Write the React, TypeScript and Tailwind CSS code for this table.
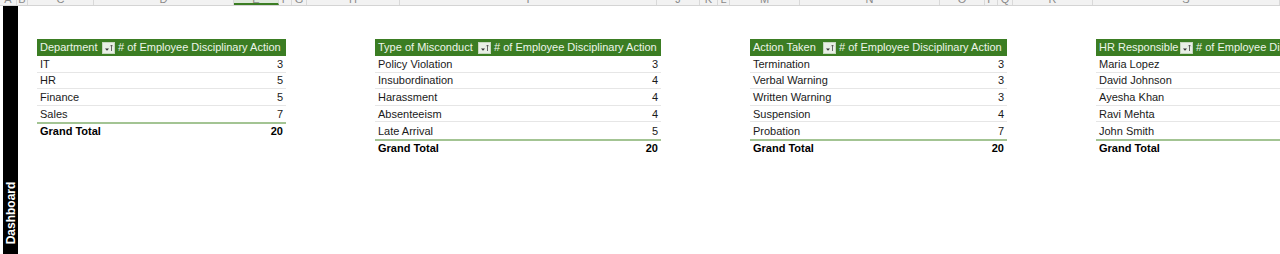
import React from 'react';

type Row = { label: string; value: number };
type Pivot = { field: string; width: string; firstCol: string; rows: Row[]; total: number };

const pivots: Pivot[] = [
    {
        field: 'Department',
        width: 'w-[249px]',
        firstCol: 'w-[79px]',
        rows: [
            { label: 'IT', value: 3 },
            { label: 'HR', value: 5 },
            { label: 'Finance', value: 5 },
            { label: 'Sales', value: 7 },
        ],
        total: 20,
    },
    {
        field: 'Type of Misconduct',
        width: 'w-[286px]',
        firstCol: 'w-[117px]',
        rows: [
            { label: 'Policy Violation', value: 3 },
            { label: 'Insubordination', value: 4 },
            { label: 'Harassment', value: 4 },
            { label: 'Absenteeism', value: 4 },
            { label: 'Late Arrival', value: 5 },
        ],
        total: 20,
    },
    {
        field: 'Action Taken',
        width: 'w-[257px]',
        firstCol: 'w-[87px]',
        rows: [
            { label: 'Termination', value: 3 },
            { label: 'Verbal Warning', value: 3 },
            { label: 'Written Warning', value: 3 },
            { label: 'Suspension', value: 4 },
            { label: 'Probation', value: 7 },
        ],
        total: 20,
    },
    {
        field: 'HR Responsible',
        width: 'w-[255px]',
        firstCol: 'w-[98px]',
        rows: [
            { label: 'Maria Lopez', value: 4 },
            { label: 'David Johnson', value: 4 },
            { label: 'Ayesha Khan', value: 4 },
            { label: 'Ravi Mehta', value: 4 },
            { label: 'John Smith', value: 4 },
        ],
        total: 20,
    },
];

// column letters along the top (only their lower edge shows)
const columns = [
    { l: 'A', w: 'w-[17px]' },
    { l: 'B', w: 'w-[11px]' },
    { l: 'C', w: 'w-[66px]' },
    { l: 'D', w: 'w-[140px]' },
    { l: 'E', w: 'w-[45px]', sel: true },
    { l: 'F', w: 'w-[13px]' },
    { l: 'G', w: 'w-[15px]' },
    { l: 'H', w: 'w-[93px]' },
    { l: 'I', w: 'w-[257px]' },
    { l: 'J', w: 'w-[43px]' },
    { l: 'K', w: 'w-[18px]' },
    { l: 'L', w: 'w-[12px]' },
    { l: 'M', w: 'w-[70px]' },
    { l: 'N', w: 'w-[140px]' },
    { l: 'O', w: 'w-[45px]' },
    { l: 'P', w: 'w-[13px]' },
    { l: 'Q', w: 'w-[15px]' },
    { l: 'R', w: 'w-[80px]' },
    { l: 'S', w: 'w-[187px]' },
];

export default function App() {
    return (
        <div className="relative w-[1280px] h-[254px] overflow-hidden bg-white font-['Liberation_Sans',Arial,sans-serif]">
            {/* COLUMN HEADER STRIP */}
            <div className="flex h-[6px] bg-[#f2f2f2] border-b border-[#d4d4d4] overflow-hidden">
                {columns.map((c) => (
                    <div
                        key={c.l}
                        className={`${c.w} shrink-0 relative border-r border-[#d9d9d9] ${c.sel ? 'bg-[#dfe9dc] border-b-2 border-b-[#3b7d23]' : ''}`}
                    >
                        <span className="absolute left-1/2 -translate-x-1/2 -top-[9px] text-[11px] text-[#8a8a8a]">{c.l}</span>
                    </div>
                ))}
            </div>

            {/* SIDE TAB */}
            <div className="absolute left-[3px] top-[6px] bottom-0 w-[15px] bg-black flex items-end justify-center">
                <span className="block -rotate-90 origin-center whitespace-nowrap text-white text-[12px] font-bold leading-none -translate-y-[35px] translate-x-[1px]">
                    Dashboard
                </span>
            </div>

            {/* PIVOT TABLES */}
            <div className="flex gap-[89px] pl-[37px] pt-[33px]">
                {pivots.map((p) => (
                    <PivotTable key={p.field} pivot={p} />
                ))}
            </div>
        </div>
    );
}

function PivotTable({ pivot }: { pivot: Pivot }) {
    return (
        <div className={`${pivot.width} shrink-0 text-[11px] leading-none`}>
            <div className="flex h-[17px] items-center bg-[#3b7d23] text-[#eef5ea]">
                <div className={`${pivot.firstCol} shrink-0 flex items-center justify-between pl-[3px] pr-[1px]`}>
                    <span className="whitespace-nowrap">{pivot.field}</span>
                    <FilterButton />
                </div>
                <div className="flex-1 pl-[2px] whitespace-nowrap">
                    # of Employee Disciplinary Action
                </div>
            </div>
            {pivot.rows.map((r, i) => (
                <div
                    key={r.label}
                    className={`flex h-[16.6px] items-center justify-between px-[3px] pt-[1px] text-[#1a1a1a] ${i < pivot.rows.length - 1 ? 'border-b border-[#e6e6e6]' : ''}`}
                >
                    <span>{r.label}</span>
                    <span>{r.value}</span>
                </div>
            ))}
            <div className="flex h-[16.6px] items-center justify-between px-[3px] border-t-2 border-[#a3c493] font-bold text-black">
                <span>Grand Total</span>
                <span>{pivot.total}</span>
            </div>
        </div>
    );
}

function FilterButton() {
    return (
        <span className="w-[13px] h-[12px] bg-[#e9efe6] border border-[#c7d6c0] flex items-center justify-center">
            <svg width="11" height="10" viewBox="0 0 11 10">
                <path d="M2 5.5 L6 5.5 L4 7.8 Z" fill="#333" />
                <path d="M8.5 2 L8.5 8" stroke="#555" strokeWidth="0.9" />
                <path d="M7.4 3.2 L8.5 2 L9.6 3.2" stroke="#555" strokeWidth="0.9" fill="none" />
            </svg>
        </span>
    );
}
